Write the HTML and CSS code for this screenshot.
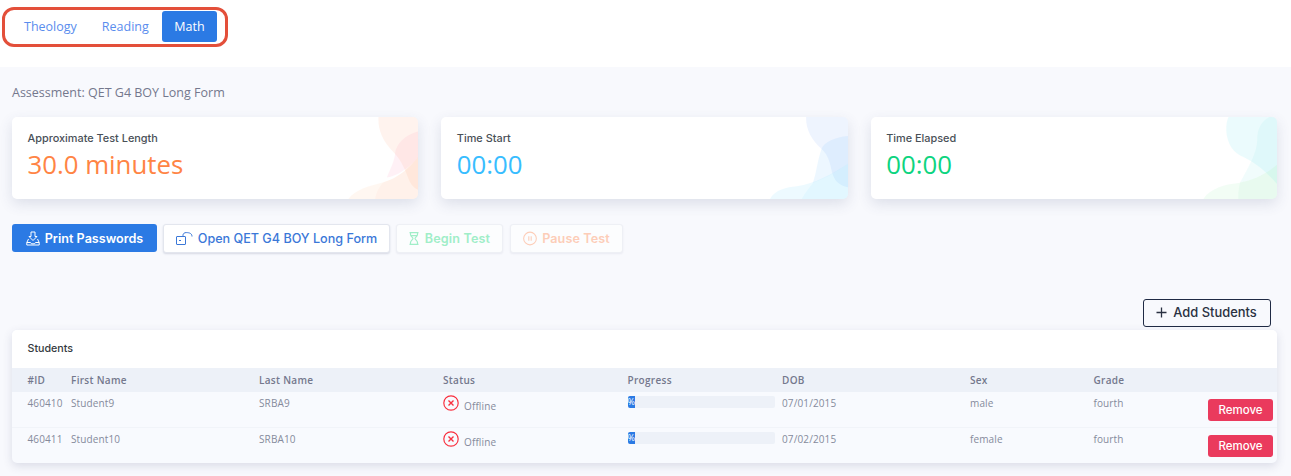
FILE: index.html
```html
<!DOCTYPE html>
<html lang="en">
<head>
<meta charset="utf-8">
<title>Assessment</title>
<link rel="stylesheet" href="styles.css">
</head>
<body>
<header class="topbar">
  <nav class="tabs">
    <a class="tab">Theology</a>
    <a class="tab">Reading</a>
    <a class="tab tab-active">Math</a>
  </nav>
</header>
<main class="content">
  <p class="assessment">Assessment: QET G4 BOY Long Form</p>
  <section class="stats">
    <article class="stat">
      <h3 class="stat-label">Approximate Test Length</h3>
      <div class="stat-value value-orange">30.0 minutes</div>
      <svg class="blob" viewBox="0 15 233 245" aria-hidden="true">
        <path fill="#ff7a45" fill-opacity=".12" d="M115 15C113 50 125 85 160 120C185 145 195 175 205 200C212 218 222 228 233 232V15Z"/>
        <path fill="#ff6fa0" fill-opacity=".12" d="M233 58C195 68 168 95 165 122C162 150 150 170 140 196C170 190 205 170 233 135Z"/>
        <path fill="#ff9a50" fill-opacity=".1" d="M25 260C45 232 85 222 130 210C170 198 205 170 233 135V260Z"/>
        <path fill="#ff7a45" fill-opacity=".06" d="M105 260C108 240 118 222 130 210C170 198 205 170 233 135V260Z"/>
      </svg>
    </article>
    <article class="stat">
      <h3 class="stat-label">Time Start</h3>
      <div class="stat-value value-sky">00:00</div>
      <svg class="blob" viewBox="-30 15 233 245" aria-hidden="true">
        <path fill="#4a86f5" fill-opacity=".12" d="M78 15C76 50 95 85 122 108C150 132 150 165 158 188C165 210 185 222 203 225V15Z"/>
        <path fill="#38b0ff" fill-opacity=".12" d="M203 72C165 75 132 90 124 110C112 145 108 185 98 212C135 200 170 178 203 155Z"/>
        <path fill="#38d0ff" fill-opacity=".12" d="M-30 260C-15 232 20 225 50 222C105 215 155 185 203 155V260Z"/>
        <path fill="#38c8ff" fill-opacity=".08" d="M65 260C75 240 88 225 98 212C135 200 170 178 203 155V260Z"/>
      </svg>
    </article>
    <article class="stat">
      <h3 class="stat-label">Time Elapsed</h3>
      <div class="stat-value value-green">00:00</div>
      <svg class="blob" viewBox="12 15 233 245" aria-hidden="true">
        <path fill="#38dcea" fill-opacity=".13" d="M100 15C85 50 95 110 135 130C175 148 205 170 245 215V15Z"/>
        <path fill="#38d8d8" fill-opacity=".09" d="M222 15C198 28 186 50 186 82C186 120 160 165 135 210C175 205 212 185 245 158V15Z"/>
        <path fill="#60e08a" fill-opacity=".11" d="M25 260C45 228 90 216 130 212C170 206 212 186 245 158V260Z"/>
        <path fill="#40d890" fill-opacity=".08" d="M130 260C128 240 132 224 135 210C175 205 212 185 245 158V260Z"/>
      </svg>
    </article>
  </section>
  <section class="actions">
    <button class="btn btn-primary">
      <svg class="btn-icon" viewBox="0 0 14 15" fill="none" stroke="currentColor" stroke-width="1"><path d="M5 1H9V5.5H11L7 9.5L3 5.5H5Z"/><path d="M2.5 8L.8 11.5V14H13.2V11.5L11.5 8M.8 11.5H4.5L5.5 12.8H8.5L9.5 11.5H13.2"/></svg>
      Print Passwords
    </button>
    <button class="btn btn-white btn-open">
      <svg class="btn-icon btn-icon-wide" viewBox="0 0 17 13" fill="none" stroke="currentColor" stroke-width="1"><rect x=".5" y="4.5" width="9" height="8" rx=".5"/><path d="M7 4V3.2C7 1.6 8.4.6 10 .6C11.8.6 16 .6 16 4.5" /><path d="M3 8.5H5" /></svg>
      Open QET G4 BOY Long Form
    </button>
    <button class="btn btn-white btn-begin">
      <svg class="btn-icon btn-icon-glass" viewBox="0 0 10 13" fill="none" stroke="currentColor" stroke-width="1.2"><path d="M.5.6H9.5M.5 12.4H9.5M1.5.6V2.5C1.5 4.5 4 5.5 4 6.5C4 7.5 1.5 8.5 1.5 10.5V12.4M8.5.6V2.5C8.5 4.5 6 5.5 6 6.5C6 7.5 8.5 8.5 8.5 10.5V12.4M2 3.6H8"/></svg>
      Begin Test
    </button>
    <button class="btn btn-white btn-pause">
      <svg class="btn-icon" viewBox="0 0 13 13" fill="none" stroke="currentColor" stroke-width="1"><circle cx="6.5" cy="6.5" r="5.9"/><path d="M5.4 4.4V8.6M7.6 4.4V8.6"/></svg>
      Pause Test
    </button>
  </section>
  <div class="add-row">
    <button class="btn-add">
      <svg class="add-icon" viewBox="0 0 11 11" fill="none" stroke="currentColor" stroke-width="1.3"><path d="M5.5.5V10.5M.5 5.5H10.5"/></svg>
      Add Students
    </button>
  </div>
  <section class="students">
    <h4 class="students-title">Students</h4>
    <table class="table">
      <colgroup>
        <col class="c-id"><col class="c-first"><col class="c-last"><col class="c-status"><col class="c-progress"><col class="c-dob"><col class="c-sex"><col class="c-grade"><col class="c-action">
      </colgroup>
      <thead>
        <tr><th class="first">#ID</th><th>First Name</th><th>Last Name</th><th>Status</th><th>Progress</th><th>DOB</th><th>Sex</th><th>Grade</th><th></th></tr>
      </thead>
      <tbody>
        <tr>
          <td class="first">460410</td><td>Student9</td><td>SRBA9</td>
          <td class="status-cell"><div class="status"><svg class="status-icon" viewBox="0 0 16 16" fill="none" stroke="currentColor"><circle cx="8" cy="8" r="7.2" stroke-width="1.2"/><path d="M5.5 5.5L10.5 10.5M10.5 5.5L5.5 10.5" stroke-width="1.4"/></svg><span class="status-text">Offline</span></div></td>
          <td class="progress-cell"><div class="progress"><div class="bar" style="width:5.4%">%</div></div></td>
          <td>07/01/2015</td><td>male</td><td>fourth</td>
          <td class="action-cell"><button class="btn-remove">Remove</button></td>
        </tr>
        <tr>
          <td class="first">460411</td><td>Student10</td><td>SRBA10</td>
          <td class="status-cell"><div class="status"><svg class="status-icon" viewBox="0 0 16 16" fill="none" stroke="currentColor"><circle cx="8" cy="8" r="7.2" stroke-width="1.2"/><path d="M5.5 5.5L10.5 10.5M10.5 5.5L5.5 10.5" stroke-width="1.4"/></svg><span class="status-text">Offline</span></div></td>
          <td class="progress-cell"><div class="progress"><div class="bar" style="width:5.4%">%</div></div></td>
          <td>07/02/2015</td><td>female</td><td>fourth</td>
          <td class="action-cell"><button class="btn-remove">Remove</button></td>
        </tr>
      </tbody>
    </table>
  </section>
</main>
</body>
</html>
```
FILE: styles.css
```css
* { box-sizing: border-box; }
html, body { margin: 0; padding: 0; }
body {
  height: 476px;
  overflow: hidden;
  background: #f8f9fd;
  font-family: "Open Sans", "Liberation Sans", sans-serif;
  color: #74788d;
}
.topbar {
  height: 67px;
  background: #fff;
  padding: 7px 0 0 2px;
}
.tabs {
  display: inline-flex;
  align-items: stretch;
  height: 40px;
  padding: 1px 8px 2px 7px;
  border: 3px solid #e34f3a;
  border-radius: 12px;
  background: #fff;
}
.tab {
  display: flex;
  align-items: center;
  padding: 0 12px;
  margin-right: 1px;
  font-size: 12.5px;
  color: #5a8dee;
  border-radius: 3px;
}
.tab-active {
  margin: 0;
  padding: 0 12.5px;
  background: #2b7ae4;
  color: #fff;
}
.content { padding: 0 14px 0 12px; }
.assessment {
  margin: 0;
  padding-top: 18px;
  height: 50px;
  line-height: 16px;
  font-size: 12.5px;
}
.stats {
  display: grid;
  grid-template-columns: repeat(3, 1fr);
  gap: 23px;
}
.stat {
  position: relative;
  height: 82px;
  padding: 14px 15.5px 0;
  background: #fff;
  border-radius: 5px;
  box-shadow: 0 5px 14px rgba(60, 70, 110, .14);
  overflow: hidden;
}
.stat-label {
  margin: 0;
  font-family: Inter, "Liberation Sans", sans-serif;
  font-size: 10.9px;
  line-height: 15px;
  font-weight: 500;
  color: #495057;
}
.stat-value {
  font-size: 25.8px;
  line-height: 36px;
}
.value-orange { color: #ff8444; }
.value-sky { color: #38bdff; }
.value-green { color: #0dd47f; }
.blob {
  position: absolute;
  top: 0;
  right: 0;
  width: 78px;
  height: 82px;
  opacity: .75;
}
.actions {
  display: flex;
  align-items: center;
  gap: 6px;
  margin-top: 24px;
  height: 30px;
}
.btn {
  display: flex;
  align-items: center;
  justify-content: center;
  height: 28px;
  border-radius: 3px;
  font-family: Inter, "Liberation Sans", sans-serif;
  font-size: 12.6px;
  font-weight: 500;
  border: 1px solid transparent;
  padding: 0;
}
.btn-icon { width: 14px; height: 15px; margin-right: 5px; flex: none; }
.btn-icon-wide { width: 17px; height: 13px; margin-right: 5px; }
.btn-icon-glass { width: 10px; height: 13px; margin-right: 6px; }
.btn-primary {
  width: 145px;
  background: #2b7ae4;
  color: #fff;
  font-weight: 600;
}
.btn-white {
  background: #fff;
  border-color: #e3e6ee;
  box-shadow: 0 1px 2px rgba(60, 70, 110, .18);
  color: #3b78d8;
  height: 29px;
}
.btn-open { width: 227px; }
.btn-begin {
  width: 107px;
  margin-right: 1px;
  color: #a0eec8;
  background: #fcfdfe;
  box-shadow: 0 1px 2px rgba(60, 70, 110, .08);
  border-color: #eef0f5;
  font-weight: 600;
  letter-spacing: .15px;
}
.btn-pause {
  width: 113px;
  color: #fdcdb8;
  background: #fcfdfe;
  box-shadow: 0 1px 2px rgba(60, 70, 110, .08);
  border-color: #eef0f5;
  font-weight: 600;
  letter-spacing: .1px;
}
.add-row {
  display: flex;
  justify-content: flex-end;
  margin-top: 46px;
  padding-right: 6px;
}
.btn-add {
  display: flex;
  align-items: center;
  justify-content: center;
  width: 128px;
  height: 28px;
  padding: 0 1px 2px 0;
  background: transparent;
  border: 1px solid #1f2a44;
  border-radius: 3px;
  font-family: Inter, "Liberation Sans", sans-serif;
  font-size: 12.9px;
  font-weight: 500;
  color: #2a3142;
}
.add-icon { width: 11px; height: 11px; margin-right: 6px; }
.students {
  margin-top: 3px;
  height: 133px;
  background: #f8fafe;
  border-radius: 5px;
  box-shadow: 0 3px 10px rgba(60, 70, 110, .16);
  overflow: hidden;
}
.students-title {
  margin: 0;
  height: 38px;
  padding: 12px 15.5px 0;
  background: #fff;
  font-family: Inter, "Liberation Sans", sans-serif;
  font-size: 10.7px;
  line-height: 14px;
  font-weight: 500;
  color: #343a40;
}
.table {
  width: 100%;
  table-layout: fixed;
  border-collapse: collapse;
  font-size: 10px;
  letter-spacing: .12px;
}
.c-id { width: 59px; }
.c-first { width: 188px; }
.c-last { width: 184px; }
.c-status { width: 184.5px; }
.c-progress { width: 154.5px; }
.c-dob { width: 188px; }
.c-sex { width: 123.5px; }
.c-grade { width: 114.5px; }
.table th {
  height: 24px;
  padding: 0 0 1px;
  text-align: left;
  font-weight: 600;
  letter-spacing: .3px;
  background: #edf1f8;
  color: #74788d;
}
.table td {
  height: 35px;
  padding: 5px 0 0;
  vertical-align: top;
  line-height: 12px;
  color: #858a9c;
}
.table tbody tr:first-child td { border-bottom: 1px solid #f1f4f9; }
.table tbody tr:last-child td { height: 36px; }
.table .first { padding-left: 15.5px; }
.status { display: flex; align-items: flex-start; }
.table .status-cell { padding-top: 3px; }
.status-icon { width: 16px; height: 16px; color: #f9303f; margin-right: 5px; flex: none; }
.status-text { padding-top: 5px; }
.table .progress-cell { padding-top: 4px; }
.progress {
  width: 147px;
  height: 12px;
  background: #edf1f8;
  border-radius: 2px;
  overflow: hidden;
}
.bar {
  height: 12px;
  background: #2b7ae4;
  color: #fff;
  font-size: 9px;
  line-height: 12px;
  letter-spacing: 0;
  text-align: left;
  white-space: nowrap;
  overflow: hidden;
}
.table .action-cell { padding-top: 7px; }
.btn-remove {
  display: block;
  width: 65px;
  height: 22px;
  padding: 0;
  border: 0;
  border-radius: 3px;
  background: #ea3a5d;
  color: #fff;
  font-family: Inter, "Liberation Sans", sans-serif;
  font-size: 11.5px;
  font-weight: 500;
}
```
